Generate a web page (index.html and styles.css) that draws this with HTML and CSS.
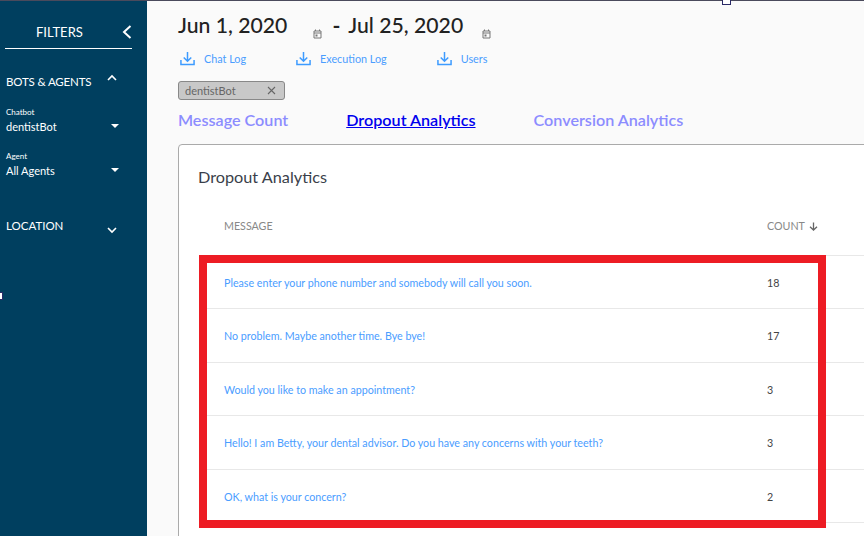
FILE: index.html
```html
<!DOCTYPE html>
<html lang="en">
<head>
    <meta charset="UTF-8">
    <title>Dropout Analytics</title>
    <link rel="stylesheet" href="styles.css">
</head>
<body>
    <div class="page">
        <aside class="sidebar">
            <div class="filters-head">
                <span class="filters-title">FILTERS</span>
                <svg class="filters-back" width="10" height="14" viewBox="0 0 10 14"><path d="M8.5 1 L2 7 L8.5 13" fill="none" stroke="#fff" stroke-width="2"/></svg>
            </div>
            <div class="group-head bots-head">
                <span class="bots-label">BOTS &amp; AGENTS</span>
                <svg class="chev" width="12" height="8" viewBox="0 0 12 8"><path d="M2 6 L6 2 L10 6" fill="none" stroke="#fff" stroke-width="1.6"/></svg>
            </div>
            <div class="field">
                <div class="field-label">Chatbot</div>
                <div class="field-value"><span>dentistBot</span><i class="caret"></i></div>
            </div>
            <div class="field">
                <div class="field-label">Agent</div>
                <div class="field-value"><span>All Agents</span><i class="caret"></i></div>
            </div>
            <div class="group-head location-head">
                <span>LOCATION</span>
                <svg class="chev chev-down" width="12" height="8" viewBox="0 0 12 8"><path d="M2 2 L6 6 L10 2" fill="none" stroke="#fff" stroke-width="1.6"/></svg>
            </div>
        </aside>
        <main class="content">
            <div class="dates">
                <span class="date">Jun 1, 2020</span>
                <svg class="cal cal-first" width="9" height="10" viewBox="0 0 9 10"><path d="M1 2 H8 V9 H1 Z M1 4 H8" fill="none" stroke="#777" stroke-width="1"/><path d="M2.5 .5 V2 M6.5 .5 V2" stroke="#777"/><rect x="2.5" y="5.5" width="2" height="2" fill="#777"/></svg>
                <span class="date date-dash">-</span>
                <span class="date">Jul 25, 2020</span>
                <svg class="cal cal-last" width="9" height="10" viewBox="0 0 9 10"><path d="M1 2 H8 V9 H1 Z M1 4 H8" fill="none" stroke="#777" stroke-width="1"/><path d="M2.5 .5 V2 M6.5 .5 V2" stroke="#777"/><rect x="2.5" y="5.5" width="2" height="2" fill="#777"/></svg>
            </div>
            <div class="downloads">
                <a class="download dl-chat">
                    <svg width="15" height="15" viewBox="0 0 16 16"><path d="M1 9.5 V14.5 H15 V9.5 M8 1 V10.5 M4 7 L8 11 L12 7" fill="none" stroke="#3d9bff" stroke-width="1.6"/></svg>
                    <span>Chat Log</span>
                </a>
                <a class="download dl-exec">
                    <svg width="15" height="15" viewBox="0 0 16 16"><path d="M1 9.5 V14.5 H15 V9.5 M8 1 V10.5 M4 7 L8 11 L12 7" fill="none" stroke="#3d9bff" stroke-width="1.6"/></svg>
                    <span>Execution Log</span>
                </a>
                <a class="download">
                    <svg width="15" height="15" viewBox="0 0 16 16"><path d="M1 9.5 V14.5 H15 V9.5 M8 1 V10.5 M4 7 L8 11 L12 7" fill="none" stroke="#3d9bff" stroke-width="1.6"/></svg>
                    <span>Users</span>
                </a>
            </div>
            <div class="chip">
                <span>dentistBot</span>
                <svg width="9" height="9" viewBox="0 0 9 9"><path d="M1 1 L8 8 M8 1 L1 8" stroke="#666" stroke-width="1.1"/></svg>
            </div>
            <div class="tabs">
                <a class="tab tab-count">Message Count</a>
                <a class="tab tab-active">Dropout Analytics</a>
                <a class="tab">Conversion Analytics</a>
            </div>
            <section class="card">
                <h3 class="card-title">Dropout Analytics</h3>
                <div class="row head-row">
                    <span class="col-msg">MESSAGE</span>
                    <span class="col-count">COUNT <svg class="sort" width="9" height="9" viewBox="0 0 9 9"><path d="M4.5 .5 V8 M1 4.8 L4.5 8 L8 4.8" fill="none" stroke="#666" stroke-width="1.3"/></svg></span>
                </div>
                <div class="row"><a class="col-msg">Please enter your phone number and somebody will call you soon.</a><span class="col-count">18</span></div>
                <div class="row"><a class="col-msg">No problem. Maybe another time. Bye bye!</a><span class="col-count">17</span></div>
                <div class="row"><a class="col-msg">Would you like to make an appointment?</a><span class="col-count">3</span></div>
                <div class="row"><a class="col-msg">Hello! I am Betty, your dental advisor. Do you have any concerns with your teeth?</a><span class="col-count">3</span></div>
                <div class="row"><a class="col-msg">OK, what is your concern?</a><span class="col-count">2</span></div>
            </section>
        </main>
    </div>
    <div class="highlight"></div>
    <div class="handle handle-top"></div>
    <div class="handle handle-left"></div>
</body>
</html>
```

FILE: styles.css
```css
html, body {
    margin: 0;
    height: 100%;
    overflow: hidden;
}
body {
    font-family: Lato, "Open Sans", sans-serif;
    background: #fafafa;
    color: #333;
}
.page {
    display: flex;
    height: 535px;
    border-top: 1px solid #4a4a5c;
}
.sidebar {
    width: 147px;
    flex-shrink: 0;
    background: #003f5f;
    color: #fff;
    padding: 0 15px 0 5px;
    box-sizing: border-box;
}
.filters-head {
    display: flex;
    align-items: center;
    justify-content: space-between;
    height: 47px;
    padding: 0 0 0 31px;
    border-bottom: 1px solid #fff;
    font-size: 13px;
}
.filters-title {
    padding-top: 14px;
}
.filters-back {
    margin-top: 14px;
}
.group-head {
    display: flex;
    justify-content: space-between;
    font-size: 11.5px;
    padding-left: 1px;
}
.bots-head {
    margin-top: 26px;
}
.bots-label {
    letter-spacing: -.15px;
}
.location-head {
    margin-top: 41px;
}
.chev {
    margin: -1px 14px 0 0;
}
.chev-down {
    margin-top: 7px;
}
.field {
    margin: 19px 0 0 1px;
}
.field + .field {
    margin-top: 17px;
}
.field-label {
    font-size: 8px;
    line-height: 10px;
}
.field-value {
    display: flex;
    justify-content: space-between;
    align-items: center;
    font-size: 11px;
    line-height: 15px;
    margin-top: 2px;
}
.caret {
    width: 0;
    height: 0;
    margin: -2px 13px 0 0;
    border-left: 4px solid transparent;
    border-right: 4px solid transparent;
    border-top: 4px solid #fff;
}
.content {
    flex: 1;
    min-width: 0;
    padding: 0 0 0 31px;
    overflow: hidden;
}
.dates {
    display: flex;
    align-items: center;
    height: 48px;
}
.date {
    font-size: 21.2px;
    font-weight: 500;
    color: #222;
    white-space: nowrap;
}
.date-dash {
    margin: 0 8px 0 0;
    font-weight: 700;
}
.cal-first {
    margin: 17px 10px 0 26px;
}
.cal-last {
    margin: 17px 0 0 19px;
}
.downloads {
    display: flex;
    align-items: center;
    height: 17px;
    margin-top: 1px;
}
.download {
    display: flex;
    align-items: center;
    gap: 9px;
    font-size: 10.8px;
    color: #4a9dff;
}
.dl-chat {
    margin: 0 50px 0 2px;
}
.dl-exec {
    margin-right: 50px;
}
.chip {
    display: flex;
    align-items: center;
    justify-content: space-between;
    width: 91px;
    height: 17px;
    margin-top: 14px;
    padding: 0 8px 0 6px;
    background: #c8c8c8;
    border: 1px solid #888;
    border-radius: 3px;
    font-size: 11px;
    color: #666;
}
.tabs {
    display: flex;
    margin-top: 7px;
    height: 24px;
    align-items: center;
    font-size: 16.15px;
    font-weight: 600;
    color: #8c8cff;
    white-space: nowrap;
}
.tab-count {
    margin-right: 58px;
}
.tab-active {
    color: #0000ee;
    text-decoration: underline;
    margin-right: 58px;
}
.card {
    margin-top: 13px;
    margin-right: -10px;
    background: #fff;
    border: 1px solid #aaa;
    border-radius: 4px;
    height: 420px;
}
.card-title {
    margin: 0;
    padding: 22px 0 0 19px;
    height: 47px;
    font-size: 16.25px;
    font-weight: 400;
    line-height: 20px;
    color: #3a3f4a;
}
.row {
    display: flex;
    align-items: center;
    height: 53.5px;
    box-sizing: border-box;
    border-bottom: 1px solid #e8e8e8;
    margin-left: 20px;
    padding: 1px 0 0 25px;
    font-size: 10.7px;
}
.head-row {
    height: 41.5px;
    padding-top: 0;
    padding-bottom: 18px;
}
.head-row .col-msg, .head-row .col-count {
    color: #888;
}
.sort {
    margin-left: 2px;
    vertical-align: -1px;
}
.col-msg {
    width: 543px;
    color: #4a9dff;
    white-space: nowrap;
}
.col-count {
    color: #444;
}
.highlight {
    position: absolute;
    left: 199px;
    top: 255px;
    width: 611px;
    height: 257px;
    border: 8px solid #ed1c24;
}
.handle {
    position: absolute;
    background: #fff;
    border: 1px solid #2a2a66;
    box-sizing: border-box;
}
.handle-top {
    left: 722px;
    top: -4px;
    width: 9px;
    height: 9px;
}
.handle-left {
    left: -6px;
    top: 292px;
    width: 9px;
    height: 8px;
}
```
